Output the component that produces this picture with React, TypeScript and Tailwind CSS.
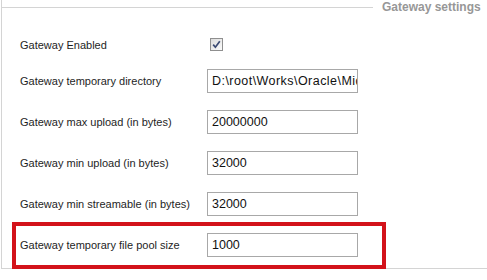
import React from "react";

const rows = [
  { label: "Gateway temporary directory", value: "D:\\root\\Works\\Oracle\\Middleware", wide: true },
  { label: "Gateway max upload (in bytes)", value: "20000000" },
  { label: "Gateway min upload (in bytes)", value: "32000" },
  { label: "Gateway min streamable (in bytes)", value: "32000" },
];

function Field({ value, wide }: { value: string; wide?: boolean }) {
  return (
    <input
      readOnly
      value={value}
      className={
        "w-[151px] h-[24px] border border-[#a8a8a8] bg-white pl-[4px] pr-0 text-[12.5px] text-[#111] outline-none font-['Liberation_Sans',sans-serif] " +
        (wide ? "tracking-[0.45px]" : "")
      }
    />
  );
}

function Checkbox() {
  return (
    <span className="w-[13px] h-[13px] border border-[#8f8f8f] bg-gradient-to-br from-[#dcdcdc] to-[#fbfbfb] flex items-center justify-center">
      <svg width="9" height="9" viewBox="0 0 9 9">
        <path d="M1.2 4.6 L3.4 7.2 L7.8 1.2" fill="none" stroke="#3b4a73" strokeWidth="1.7" />
      </svg>
    </span>
  );
}

export default function App() {
  return (
    <div className="w-[487px] h-[280px] bg-white overflow-hidden font-['Liberation_Sans',sans-serif] text-[11px] text-[#1e1e1e]">
      <div className="mt-[7px] ml-[1px] w-[540px] h-[270px] border-l border-b border-[#d4d4d4]">
        <div className="-mt-[8px] h-[16px] flex items-center">
          <div className="w-[371px] h-px bg-[#d4d4d4]" />
          <span className="ml-[9px] text-[12px] font-bold text-[#979797] leading-none">Gateway settings</span>
        </div>

        <div className="pt-[18px] flex flex-col gap-[17px]">
          <div className="h-[24px] flex items-center pl-[18px] -mb-[5px]">
            <span className="w-[187px]">Gateway Enabled</span>
            <span className="ml-[3px] -mt-[2px]">
              <Checkbox />
            </span>
          </div>

          {rows.map((r) => (
            <div key={r.label} className="h-[24px] flex items-center pl-[18px]">
              <span className="w-[187px]">{r.label}</span>
              <Field value={r.value} wide={r.wide} />
            </div>
          ))}

          <div className="relative h-[24px] flex items-center pl-[18px]">
            <span className="w-[187px]">Gateway temporary file pool size</span>
            <Field value="1000" />
            <div className="absolute left-[10px] -top-[11px] w-[374px] h-[47px] border-[4px] border-[#d3121a]" />
          </div>
        </div>
      </div>
    </div>
  );
}
